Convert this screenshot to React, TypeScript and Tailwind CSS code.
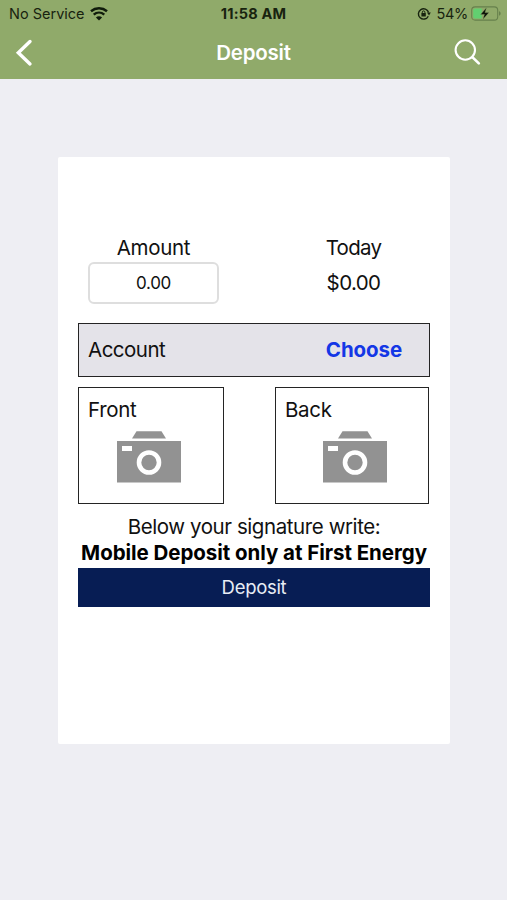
import type { ReactNode } from "react";

function WifiIcon() {
  return (
    <svg width="18" height="14" viewBox="0 0 18 14" fill="none" stroke="#101b0b">
      <path d="M1 4.200C5.600.4 12.400.4 17 4.200" strokeWidth="2.500" />
      <path d="M3.700 7.600c3.100-2.700 7.500-2.700 10.600 0" strokeWidth="2.400" />
      <path d="M9 13.400 5.900 10.400c1.700-1.500 4.500-1.500 6.200 0z" fill="#101b0b" stroke="none" />
    </svg>
  );
}

function RotationLockIcon() {
  return (
    <svg width="14" height="14" viewBox="0 0 14 14" fill="none" stroke="#18230f">
      <path d="M11.600 5.500A5.200 5.200 0 1 0 11.300 9.200" strokeWidth="1.400" />
      <path d="M10 5.600h3.800L12 8.500z" fill="#18230f" stroke="none" />
      <path d="M5.300 6.300V5.200a1.300 1.300 0 0 1 2.600 0v1.100" strokeWidth="1" />
      <rect x="4.400" y="6.100" width="4.400" height="3.300" rx=".5" fill="#18230f" stroke="none" />
    </svg>
  );
}

function BatteryIcon() {
  return (
    <svg width="31" height="15" viewBox="0 0 31 15" fill="none">
      <rect x=".7" y=".9" width="26" height="13.200" rx="3.400" stroke="#66804c" strokeWidth="1.100" />
      <path d="M4 2.400h6.800v10.200H4A1.800 1.800 0 0 1 2.200 10.800V4.200A1.800 1.800 0 0 1 4 2.400z" fill="#62cf70" />
      <path d="M28 5.300c2.200.7 2.200 3.700 0 4.400z" fill="#66804c" />
      <path d="M15.600 1.600 9.500 8.400h3.900L11.800 13.400 18 6.600h-3.900z" fill="#0b1208" stroke="#8faa69" strokeWidth=".4" />
    </svg>
  );
}

function CameraIcon() {
  return (
    <svg width="64" height="52" viewBox="0 0 64 52" className="block">
      <path d="M19.500.2h25l4.500 7.400h-34z" fill="#929292" />
      <rect y="10" width="64" height="41.500" fill="#929292" />
      <rect x="5" y="15" width="10" height="5" fill="#fff" />
      <circle cx="32" cy="31.500" r="10" fill="none" stroke="#fff" strokeWidth="4.600" />
    </svg>
  );
}

function Photo({ label, className }: { label: string; className: string }): ReactNode {
  return (
    <button className={`flex h-[117px] flex-col items-start border border-[#242424] bg-white pt-[9px] ${className}`}>
      <span className="pl-[9px] text-[20.500px] leading-[26px] tracking-[-0.300px]">{label}</span>
      <span className="mt-[8px] pl-[38px] group-last:pl-[47px]">
        <CameraIcon />
      </span>
    </button>
  );
}

export default function App() {
  return (
    <div className="flex h-[900px] w-[507px] flex-col bg-[#eeeef3] font-['Inter','Liberation_Sans',sans-serif] text-[#111]">
      <header className="h-[79px] shrink-0 bg-[#90aa6a]">
        <div className="grid h-[27px] grid-cols-3 items-center text-[14.500px] text-[#18230f]">
          <div className="flex items-center gap-[5px] pl-[9px]">
            <span className="whitespace-nowrap">No Service</span>
            <WifiIcon />
          </div>
          <span className="text-center text-[14.500px] font-bold tracking-[0.200px] whitespace-nowrap">11:58 AM</span>
          <div className="flex items-center justify-end pr-[5px]">
            <RotationLockIcon />
            <span className="mr-[3px] ml-[5px] tracking-[-0.300px]">54%</span>
            <BatteryIcon />
          </div>
        </div>
        <div className="grid h-[52px] grid-cols-[1fr_auto_1fr] items-center text-white">
          <svg className="ml-[15px]" width="20" height="28" viewBox="0 0 20 28" fill="none" stroke="white" strokeWidth="3.400" strokeLinecap="round">
            <path d="M15 2.500 3.300 13.700l11.700 11.200" />
          </svg>
          <h1 className="text-[20.500px] leading-[26px] font-semibold tracking-[-0.200px]">Deposit</h1>
          <svg className="mr-[25px] justify-self-end" width="28" height="28" viewBox="0 0 28 28" fill="none" stroke="white" strokeLinecap="round">
            <circle cx="11.300" cy="11" r="9.700" strokeWidth="2.100" />
            <path d="m18.600 18.400 6.200 6" strokeWidth="2.700" />
          </svg>
        </div>
      </header>
      <main className="mt-[78px] ml-[58px] h-[587px] w-[392px] rounded-[2px] bg-white px-[20px] pt-[78px]">
        <div className="flex justify-between pr-[10px] pl-[10px] text-center text-[20.500px] leading-[26px] tracking-[-0.400px]">
          <div className="w-[131px]">
            <label htmlFor="amount" className="block tracking-[-0.300px]">Amount</label>
            <input id="amount" defaultValue="0.00" className="mt-px block h-[42px] w-full rounded-[6px] border-2 border-[#dedede] bg-white text-center text-[17px] tracking-[-0.300px]" />
          </div>
          <div className="w-[133px]">
            <p className="tracking-[-0.700px]">Today</p>
            <p className="mt-[9px] tracking-[-0.600px]">$0.00</p>
          </div>
        </div>
        <div className="mt-[19px] flex h-[54px] items-center justify-between border border-[#242424] bg-[#e4e3e9] pr-[27px] pl-[9px] text-[20.500px]">
          <span className="tracking-[-0.500px]">Account</span>
          <button className="font-bold tracking-[-0.100px] text-[#1437e6]">Choose</button>
        </div>
        <div className="mt-[10px] flex justify-between pr-px text-left">
          <div>
            <Photo label="Front" className="w-[146px]" />
          </div>
          <div className="group">
            <Photo label="Back" className="w-[154px]" />
          </div>
        </div>
        <div className="mt-[10px] text-center text-[20.500px] leading-[26px] tracking-[-0.420px] whitespace-nowrap">
          <p>Below your signature write:</p>
          <p className="font-bold tracking-[-0.050px] text-black">Mobile Deposit only at First Energy</p>
        </div>
        <button className="mt-[2px] block h-[39px] w-full bg-[#071d54] text-[18.500px] tracking-[-0.300px] text-[#e8edf5]">Deposit</button>
      </main>
    </div>
  );
}
